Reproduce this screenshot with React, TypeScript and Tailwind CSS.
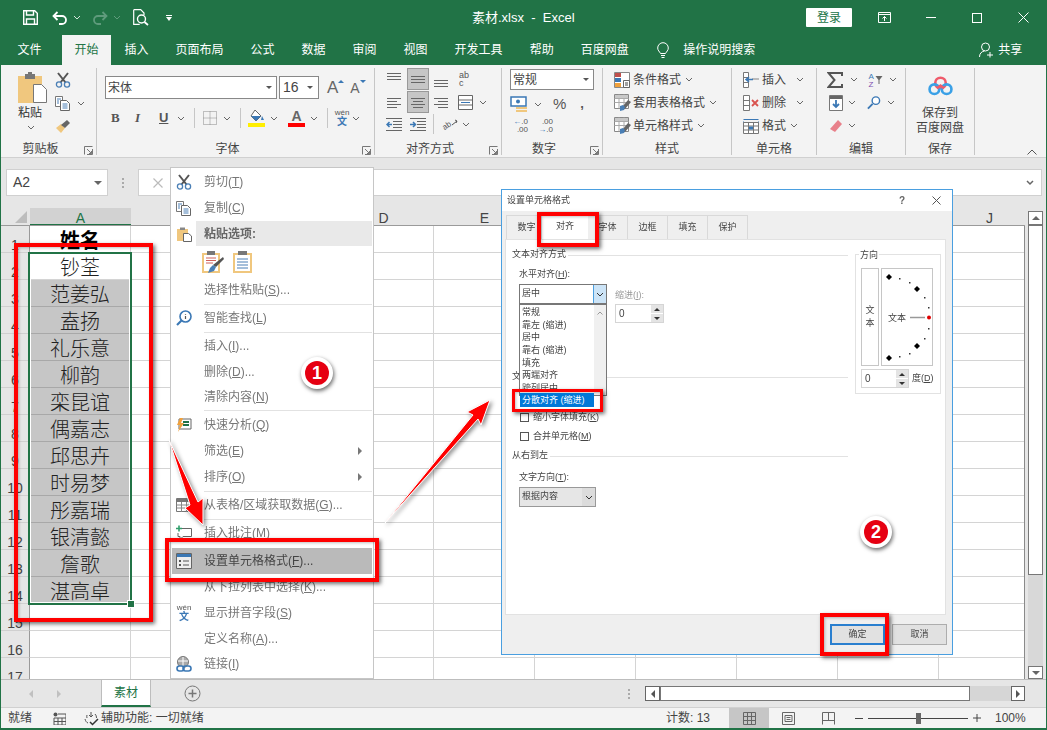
import React from "react";

function Chev({ c = "#666" }: { c?: string }) {
  return (
    <svg width="8" height="5" viewBox="0 0 8 5" className="shrink-0">
      <path d="M1 1l3 3 3-3" fill="none" stroke={c} strokeWidth="1" />
    </svg>
  );
}

function Launcher() {
  return (
    <svg width="9" height="9" viewBox="0 0 9 9" className="shrink-0">
      <path d="M.5 8.500v-8h8M8.500 3v5.500H3M3 3l4.500 4.500M7.500 5v2.500H5" fill="none" stroke="#777" strokeWidth="1" />
    </svg>
  );
}

function Lines({ rows, w = 16, h = 14, c = "#666" }: { rows: number[][]; w?: number; h?: number; c?: string }) {
  return (
    <svg width={w} height={h} viewBox={`0 0 ${w} ${h}`} className="shrink-0">
      {rows.map((r, i) => (
        <line key={i} x1={r[0]} x2={r[1]} y1={r[2] + 0.5} y2={r[2] + 0.5} stroke={c} strokeWidth="1" />
      ))}
    </svg>
  );
}

// underlines the access key, as in 剪切(T)
function Acc({ text }: { text: string }) {
  const m = text.match(/^(.*\()(.)(\).*)$/);
  if (!m) return <>{text}</>;
  return (
    <>
      {m[1]}
      <span className="underline">{m[2]}</span>
      {m[3]}
    </>
  );
}

function Scissors({ s = 16 }: { s?: number }) {
  return (
    <svg width={s} height={s} viewBox="0 0 16 16">
      <path d="M3 1l7.500 9.500M13 1L5.500 10.500" stroke="#555" strokeWidth="2" fill="none" />
      <circle cx="4" cy="12.500" r="2.600" fill="none" stroke="#4a7fb5" strokeWidth="1.300" />
      <circle cx="12" cy="12.500" r="2.600" fill="none" stroke="#4a7fb5" strokeWidth="1.300" />
    </svg>
  );
}

function CopyIcon() {
  return (
    <svg width="16" height="15" viewBox="0 0 16 15">
      <path d="M.5.500h7v10h-7z" fill="#fff" stroke="#777" />
      <path d="M5.500 4.500h6l3 3v7h-9z" fill="#fff" stroke="#666" />
      <path d="M2 3h4M2 5h2M2 7h2M7.500 8h5M7.500 10h5M7.500 12h5" stroke="#4a7fb5" />
    </svg>
  );
}

function PasteSmall() {
  return (
    <svg width="16" height="16" viewBox="0 0 16 16">
      <path d="M1 3h11v12H1z" fill="#f0c77e" />
      <path d="M4 1.500h5V4H4z" fill="#888" />
      <path d="M7.500 7.500h5l3 2.500v5.500h-8z" fill="#fff" stroke="#666" />
    </svg>
  );
}

function WenIcon() {
  return (
    <div className="flex flex-col items-center leading-none w-[18px]">
      <span className="text-[8px] leading-[8px] text-[#555]">wén</span>
      <span className="text-[10px] leading-[10px] font-bold text-[#3b78b5]">文</span>
    </div>
  );
}

function BrushMark() {
  return (
    <svg width="16" height="15" viewBox="0 0 16 15">
      <path d="M1 9l5-4 4 4-4 5z" fill="#f0c77e" />
      <path d="M6 6l6-5 3 3-5 5z" fill="#666" />
    </svg>
  );
}

function TableFmt({ accent = "#4a7fb5" }: { accent?: string }) {
  return (
    <svg width="17" height="17" viewBox="0 0 17 17">
      <path d="M.5.500h14v14H.5z" fill="#fff" stroke="#888" />
      <path d="M.5 4.500h14M.5 8.500h14M5 .5v14M10 .5v14" stroke="#aaa" />
      <path d="M1 1h13v3H1z" fill="#c8c8c8" />
      <path d="M14 6l3 2-6 7-3 1 1-4z" fill="#666" />
      <path d="M6 12l3-1 2 2-1 3-4 1z" fill={accent} />
    </svg>
  );
}

function Indent({ flip }: { flip?: boolean }) {
  return (
    <svg width="16" height="13" viewBox="0 0 16 13" className="shrink-0">
      <path d="M0 .5h16M7 3.500h9M7 6.500h9M7 9.500h9M0 12.500h16" stroke="#666" />
      <path d={flip ? "M0 6.500h5M3 4l2.500 2.500L3 9" : "M6 6.500H1M3.500 4L1 6.500 3.500 9"} fill="none" stroke="#3b78b5" strokeWidth="1.500" />
    </svg>
  );
}

function Group({ w, label, launcher, children }: { w: number; label: string; launcher?: boolean; children: React.ReactNode }) {
  return (
    <div className="flex flex-col border-r border-[#c6c6c6] shrink-0" style={{ width: w }}>
      <div className="h-[72px] shrink-0">{children}</div>
      <div className="h-[15px] shrink-0 flex items-end text-[12px] leading-[12px] text-[#444]">
        <span className={launcher ? "flex-1 text-center pr-[4px]" : "w-full text-center"}>{label}</span>
        {launcher && (
          <span className="w-[12px] flex">
            <Launcher />
          </span>
        )}
      </div>
    </div>
  );
}

function StyleRow({ icon, label, gap }: { icon: React.ReactNode; label: string; gap: number }) {
  return (
    <div className="h-[23px] flex items-center">
      <span className="w-[19px] flex">{icon}</span>
      <span className="text-[12px] text-[#444]">{label}</span>
      <span className="flex" style={{ marginLeft: gap }}>
        <Chev />
      </span>
    </div>
  );
}

function TopTab({ label, active }: { label: string; active?: boolean }) {
  return (
    <div className={`h-[30px] flex items-center justify-center whitespace-nowrap text-[12px] ${active ? "bg-[#f3f3f3] text-[#217346] w-[49px]" : "text-white px-[13.5px]"}`}>
      {label}
    </div>
  );
}

const names = ["钞荃", "范姜弘", "盍扬", "礼乐意", "柳韵", "栾昆谊", "偶嘉志", "邱思卉", "时易梦", "彤嘉瑞", "银清懿", "詹歌", "湛高卓"];
const rowNums = [1, 2, 3, 4, 5, 6, 7, 8, 9, 10, 11, 12, 13, 14, 15, 16, 17];
const colNames = ["B", "C", "D", "E", "F", "G", "H", "I", "J"];

function Grid() {
  return (
    <div className="relative flex-1 flex flex-col overflow-hidden border-r border-[#8a8a8a] bg-white">
      {rowNums.map((n) => {
        const name = n >= 2 && n <= 14 ? names[n - 2] : null;
        const sel = n >= 3 && n <= 14;
        return (
          <div key={n} className="flex h-[27px] shrink-0">
            <div className="w-[29px] shrink-0 bg-[#e6e6e6] border-r border-b border-r-[#9a9a9a] border-b-[#d0d0d0] flex items-end justify-center text-[14px] leading-[13px] text-[#444]">
              {n}
            </div>
            <div className={`w-[101px] shrink-0 border-b border-r flex items-center justify-center pt-[3px] text-[20px] leading-[24px] font-light text-[#222] ${sel ? "bg-[#c6c6c6] border-[#a8a8a8]" : "border-[#d4d4d4]"}`}>
              {n === 1 ? <span className="font-bold text-black">姓名</span> : name}
            </div>
            {colNames.map((c) => (
              <div key={c} className="w-[101px] shrink-0 border-b border-r border-[#d4d4d4]" />
            ))}
          </div>
        );
      })}
      <div className="absolute left-[27px] top-[26px] w-[104px] h-[353px] border-2 border-[#217346] shadow-[inset_0_0_0_1px_#fff]" />
      <div className="absolute left-[127px] top-[375px] w-[6px] h-[6px] bg-[#217346] outline outline-white" />
    </div>
  );
}

function MenuRow({ label, icon, sub, h = 26, hi, sel }: { label: string; icon?: React.ReactNode; sub?: boolean; h?: number; hi?: boolean; sel?: boolean }) {
  return (
    <div className={`flex items-center mx-[1px] ${sel ? "bg-[#bababa]" : ""}`} style={{ height: h }}>
      <span className="w-[24px] flex justify-center shrink-0">{icon}</span>
      <span className={`flex-1 h-full flex items-center pl-[8px] whitespace-pre text-[12px] ${hi ? "bg-[#e9e9e9] font-bold text-[#666]" : sel ? "text-[#444]" : "text-[#777]"}`}>
        <span>
          <Acc text={label} />
        </span>
      </span>
      {sub && <span className="mr-[10px] w-0 h-0 border-y-[4px] border-y-transparent border-l-[4px] border-l-[#777]" />}
    </div>
  );
}

function MenuSep({ h = 2 }: { h?: number }) {
  return (
    <div className="flex items-center pl-[33px] pr-[1px]" style={{ height: h }}>
      <div className="h-[1px] w-full bg-[#e2e2e2]" />
    </div>
  );
}

function ContextMenu() {
  return (
    <div className="absolute left-[170px] top-[167px] w-[204px] h-[512px] bg-white border border-[#c6c6c6] pt-[1px] z-10 [filter:blur(0.3px)]">
      <MenuRow label="剪切(T)" icon={<Scissors />} />
      <MenuRow label="复制(C)" icon={<CopyIcon />} />
      <MenuRow label="粘贴选项:" icon={<PasteSmall />} h={25} hi />
      <div className="h-[31px] flex items-center gap-[9px] pl-[31px]">
        <svg width="22" height="23" viewBox="0 0 22 23">
          <path d="M0 3h18v20H0z" fill="#f0c77e" />
          <path d="M2 5h14v16H2z" fill="#fff" />
          <path d="M5 1h8v4H5z" fill="#777" />
          <path d="M4 8h10M4 10.500h10M4 13h7" stroke="#d0605a" />
          <path d="M21 7l1 2-8 8-3-2z" fill="#555" />
          <path d="M11 15l3 2-2 4-6 2 2-5z" fill="#4a7fb5" />
        </svg>
        <svg width="19" height="23" viewBox="0 0 19 23">
          <path d="M0 3h19v20H0z" fill="#f0c77e" />
          <path d="M2 5h15v16H2z" fill="#fff" />
          <path d="M5 1h9v4H5z" fill="#777" />
          <path d="M4 9h11M4 12h11M4 15h11M4 18h11" stroke="#4a7fb5" />
        </svg>
      </div>
      <MenuRow label="选择性粘贴(S)..." />
      <MenuSep />
      <MenuRow
        label="智能查找(L)"
        icon={
          <svg width="16" height="16" viewBox="0 0 16 16">
            <circle cx="9.500" cy="6.500" r="5.500" fill="#fff" stroke="#3b78b5" strokeWidth="1.600" />
            <path d="M5.500 10.500L1 15" stroke="#3b78b5" strokeWidth="2.200" />
            <path d="M9.500 4v.8M9.500 6v3" stroke="#555" strokeWidth="1.200" />
          </svg>
        }
      />
      <MenuSep />
      <MenuRow label="插入(I)..." />
      <MenuRow label="删除(D)..." h={25} />
      <MenuRow label="清除内容(N)" />
      <MenuSep h={1} />
      <MenuRow
        label="快速分析(Q)"
        h={27}
        icon={
          <svg width="16" height="16" viewBox="0 0 16 16">
            <path d="M3 2h12v10H3z" fill="#fff" stroke="#666" />
            <path d="M7 5h6M7 8h6" stroke="#217346" strokeWidth="2" />
            <path d="M4 1L1 8h3l-2 7 6-9H5l2-5z" fill="#f0a13c" />
          </svg>
        }
      />
      <MenuRow label="筛选(E)" sub />
      <MenuRow label="排序(O)" sub />
      <MenuSep />
      <MenuRow
        label="从表格/区域获取数据(G)..."
        icon={
          <svg width="16" height="16" viewBox="0 0 16 16">
            <path d="M.5 1.500h15v13H.5z" fill="#fff" stroke="#777" />
            <path d="M1 2h14v3H1z" fill="#777" />
            <path d="M.5 8h15M.5 11h15M5.500 5v10M10.500 5v10" stroke="#888" />
          </svg>
        }
      />
      <MenuSep />
      <MenuRow
        label="插入批注(M)"
        icon={
          <svg width="16" height="16" viewBox="0 0 16 16">
            <path d="M5 3.500h10.500v8H7l-3 3v-3H2V8" fill="#fff" stroke="#666" />
            <path d="M3 .5v6M0 3.500h6" stroke="#2f9e6b" strokeWidth="1.600" />
          </svg>
        }
      />
      <div className="h-[2px]" />
      <MenuRow
        label="设置单元格格式(F)..."
        sel
        icon={
          <svg width="16" height="16" viewBox="0 0 16 16">
            <path d="M.5.500h15v15H.5z" fill="#eee" stroke="#666" />
            <path d="M1 1h14v3H1z" fill="#3b78b5" />
            <path d="M3 7h2v2H3zM3 11h2v2H3z" fill="#555" />
            <path d="M7 8h6M7 12h6" stroke="#555" />
          </svg>
        }
      />
      <MenuRow label="从下拉列表中选择(K)..." />
      <MenuRow label="显示拼音字段(S)" icon={<WenIcon />} />
      <MenuRow label="定义名称(A)..." h={25} />
      <MenuRow
        label="链接(I)"
        icon={
          <svg width="16" height="17" viewBox="0 0 16 17">
            <circle cx="7" cy="6" r="5.500" fill="#aaa" stroke="#777" />
            <path d="M2 5h10M7 1v9" stroke="#fff" />
            <rect x="1" y="10" width="7" height="5" rx="2.500" fill="#fff" stroke="#3b78b5" strokeWidth="1.600" />
            <rect x="7" y="10" width="8" height="5" rx="2.500" fill="none" stroke="#3b78b5" strokeWidth="1.600" />
          </svg>
        }
      />
    </div>
  );
}

function Spin({ w, value }: { w: number; value: string }) {
  return (
    <div className="h-[19px] bg-white border border-[#d5d5d5] flex items-center text-[10px] text-[#444]" style={{ width: w }}>
      <span className="flex-1 pl-[3px]">{value}</span>
      <div className="w-[12px] h-full flex flex-col gap-[1px] bg-[#fff]">
        <span className="flex-1 bg-[#e4e4e4] flex items-center justify-center">
          <span className="w-0 h-0 border-x-[3px] border-x-transparent border-b-[3px] border-b-[#333]" />
        </span>
        <span className="flex-1 bg-[#e4e4e4] flex items-center justify-center">
          <span className="w-0 h-0 border-x-[3px] border-x-transparent border-t-[3px] border-t-[#333]" />
        </span>
      </div>
    </div>
  );
}

function Heading({ label, style }: { label: string; style?: React.CSSProperties }) {
  return (
    <div className="h-[12px] flex items-center gap-[2px] text-[9px] text-[#444] pl-[6px]" style={style}>
      <span className="shrink-0">{label}</span>
      <div className="flex-1 h-[1px] bg-[#e2e2e2]" />
    </div>
  );
}

function Check({ label, mt }: { label: string; mt?: number }) {
  return (
    <div className="h-[19px] flex items-center gap-[4px] pl-[14px] text-[9px] text-[#444]" style={{ marginTop: mt }}>
      <span className="w-[9px] h-[9px] bg-white border border-[#555]" />
      <span>
        <Acc text={label} />
      </span>
    </div>
  );
}

function Dial() {
  const big = [[7, 8], [35, 20], [35, 77], [7, 89]];
  const small = [[17, 9], [27, 13], [42, 28], [46, 38], [46, 59], [42, 69], [27, 84], [17, 87]];
  return (
    <div className="relative w-[52px] h-[98px] border border-[#c6c6c6] bg-[#fff]">
      <svg width="50" height="96" viewBox="0 0 50 96">
        {big.map((p, i) => (
          <path key={i} d={`M${p[0]} ${p[1] - 3}l3 3-3 3-3-3z`} fill="#000" />
        ))}
        {small.map((p, i) => (
          <rect key={i} x={p[0]} y={p[1]} width="1.500" height="1.500" fill="#333" />
        ))}
        <path d="M28 48.500h15" stroke="#999" strokeWidth="1.500" />
        <circle cx="47" cy="48.500" r="2" fill="#e00000" />
      </svg>
      <span className="absolute left-[6px] top-[44px] text-[9px] leading-[10px] text-[#444]">文本</span>
    </div>
  );
}

function Dialog() {
  const tabs = ["字体", "边框", "填充", "保护"];
  const opts = ["常规", "靠左 (缩进)", "居中", "靠右 (缩进)", "填充", "两端对齐", "跨列居中"];
  return (
    <div className="absolute left-[501px] top-[189px] w-[452px] h-[466px] bg-[#efefef] border border-[#4a9fe0] z-10 flex flex-col [filter:blur(0.35px)]">
      <div className="h-[21px] bg-white flex items-center pl-[5px] text-[9px] text-[#444] shrink-0">
        <span className="flex-1">设置单元格格式</span>
        <span className="text-[10px] font-bold text-[#666] mr-[27px]">?</span>
        <svg width="9" height="9" viewBox="0 0 9 9" className="mr-[11px]">
          <path d="M.5.500l8 8M8.500.500l-8 8" stroke="#555" />
        </svg>
      </div>
      <div className="h-[28px] pl-[4px] flex items-end text-[9px] text-[#444] shrink-0 pt-[4px]">
        <div className="w-[36px] h-[24px] pl-[5px] border border-b-0 border-[#d9d9d9] flex items-center justify-center">数字</div>
        <div className="w-[46px] h-[25px] bg-white flex items-center justify-center">对齐</div>
        {tabs.map((t) => (
          <div key={t} className="w-[40px] h-[24px] border border-b-0 border-l-0 border-[#d9d9d9] flex items-center justify-center">
            {t}
          </div>
        ))}
      </div>
      <div className="ml-[3px] w-[441px] h-[376px] bg-white border border-[#e2e2e2] flex shrink-0">
        <div className="w-[342px] shrink-0 pt-[9px]">
          <Heading label="文本对齐方式" />
          <div className="pl-[13px] pt-[7px] text-[9px] text-[#444] leading-[12px]">
            <Acc text="水平对齐(H):" />
          </div>
          <div className="pl-[13px] pt-[4px] flex gap-[8px]">
            <div className="relative w-[88px] h-[20px] z-10 border border-[#777] bg-white flex items-center text-[9px] text-[#444]">
              <span className="flex-1 pl-[2px]">居中</span>
              <span className="w-[13px] h-full bg-[#cce4f7] border-l border-[#4a9fe0] flex items-center justify-center">
                <Chev c="#333" />
              </span>
              <div className="absolute left-[-1px] top-[19px] w-[88px] h-[92px] bg-white border border-[#777] flex flex-col pt-[1px]">
                {opts.map((o) => (
                  <div key={o} className="h-[12.700px] leading-[12.700px] pl-[2px] text-[9px] text-[#444]">
                    {o}
                  </div>
                ))}
                <div className="absolute right-0 top-0 bottom-0 w-[12px] bg-[#f0f0f0] flex justify-center pt-[6px]">
                  <svg width="6" height="4" viewBox="0 0 6 4">
                    <path d="M.5 3.500L3 1l2.500 2.500" fill="none" stroke="#999" />
                  </svg>
                </div>
              </div>
            </div>
            <div className="pt-[5px]">
              <div className="text-[9px] leading-[12px] text-[#999] pb-[3px]">
                <Acc text="缩进(I):" />
              </div>
              <Spin w={49} value="0" />
            </div>
          </div>
          <Heading label="文本控制" style={{ marginTop: 48 }} />
          <Check label="自动换行(W)" mt={5} />
          <Check label="缩小字体填充(K)" mt={1} />
          <Check label="合并单元格(M)" />
          <Heading label="从右到左" style={{ marginTop: 4 }} />
          <div className="pl-[13px] pt-[9px] text-[9px] text-[#444] leading-[12px]">
            <Acc text="文字方向(T):" />
          </div>
          <div className="ml-[13px] mt-[4px] w-[77px] h-[20px] border border-[#999] bg-[#e6e6e6] flex items-center text-[9px] text-[#444]">
            <span className="flex-1 pl-[2px]">根据内容</span>
            <span className="w-[13px] h-full bg-[#dcdcdc] flex items-center justify-center">
              <Chev c="#333" />
            </span>
          </div>
        </div>
        <div className="ml-[7px] mt-[14px] w-[86px] h-[140px] border border-[#e2e2e2] relative pt-[13px] pl-[5px]">
          <span className="absolute left-[3px] top-[-6px] bg-white px-[1px] text-[9px] leading-[12px] text-[#444]">方向</span>
          <div className="flex gap-[2px]">
            <div className="w-[18px] h-[98px] border border-[#c6c6c6] flex flex-col items-center justify-center text-[9px] leading-[13px] text-[#444]">
              <span>文</span>
              <span>本</span>
            </div>
            <Dial />
          </div>
          <div className="flex items-center gap-[3px] mt-[3px]">
            <Spin w={48} value="0" />
            <span className="text-[9px] text-[#444]">
              <Acc text="度(D)" />
            </span>
          </div>
        </div>
      </div>
      <div className="flex justify-end gap-[7px] pr-[5px] pt-[9px] text-[9px] text-[#444]">
        <div className="w-[55px] h-[21px] bg-[#e1e1e1] border-2 border-[#2a7fcf] flex items-center justify-center">确定</div>
        <div className="w-[55px] h-[21px] bg-[#e1e1e1] border border-[#adadad] flex items-center justify-center">取消</div>
      </div>
    </div>
  );
}

function Badge({ n, x, y }: { n: number; x: string; y: string }) {
  return (
    <div className={`absolute ${x} ${y} z-30 w-[32px] h-[32px] rounded-full bg-white shadow-[1px_2px_4px_rgba(0,0,0,0.6)] flex items-center justify-center`}>
      <span className="w-[24px] h-[24px] rounded-full bg-[#e60012] text-white text-[18px] font-bold flex items-center justify-center">{n}</span>
    </div>
  );
}

const redBox = "absolute z-20 border-[4px] border-[#ff0000] shadow-[2px_2px_4px_rgba(0,0,0,0.55),inset_1px_1px_3px_rgba(0,0,0,0.25)]";

export default function App() {
  return (
    <div className="relative w-[1047px] h-[730px] overflow-hidden bg-[#217346] px-[1px] pb-[2px] flex flex-col [font-family:'Liberation_Sans','Noto_Sans_CJK_SC',sans-serif]">
      {/* title bar */}
      <div className="h-[35px] shrink-0 flex items-center text-white">
        <div className="w-[22px]" />
        <svg width="15" height="15" viewBox="0 0 15 15">
          <path d="M.7.700h11l2.600 2.600v11H.7z" fill="none" stroke="#fff" strokeWidth="1.400" />
          <path d="M3.500 1v4h7V1M3.500 14V9h8v5" fill="none" stroke="#fff" strokeWidth="1.400" />
        </svg>
        <div className="w-[14px]" />
        <svg width="16" height="14" viewBox="0 0 16 14">
          <path d="M5.500 1L1.500 5l4 4M2 5h8a4 4 0 0 1 0 8H7" fill="none" stroke="#fff" strokeWidth="1.800" />
        </svg>
        <span className="ml-[5px] flex">
          <Chev c="#d5e5dc" />
        </span>
        <div className="w-[11px]" />
        <svg width="16" height="14" viewBox="0 0 16 14">
          <path d="M10.500 1l4 4-4 4M14 5H6a4 4 0 0 0 0 8h3" fill="none" stroke="#5f9b7c" strokeWidth="1.800" />
        </svg>
        <span className="ml-[5px] flex">
          <Chev c="#5f9b7c" />
        </span>
        <div className="w-[12px]" />
        <svg width="16" height="17" viewBox="0 0 16 17">
          <path d="M.7.700h7l3.300 3.300V6M.7.700v14.600h6" fill="none" stroke="#fff" strokeWidth="1.200" />
          <circle cx="8.500" cy="10" r="4" fill="none" stroke="#fff" strokeWidth="1.400" />
          <path d="M11.500 13l3.500 3" stroke="#fff" strokeWidth="1.800" />
        </svg>
        <span className="ml-[17px] flex flex-col items-center gap-[1px]">
          <span className="w-[6px] h-[1px] bg-white" />
          <span className="w-0 h-0 border-x-[3px] border-x-transparent border-t-[4px] border-t-white" />
        </span>
        <div className="w-[300px]" />
        <span className="text-[13px] whitespace-pre w-[334px]">素材.xlsx  -  Excel</span>
        <div className="w-[46px] h-[19px] bg-white rounded-[1px] text-[12px] text-[#217346] flex items-center justify-center">登录</div>
        <div className="w-[26px]" />
        <svg width="13" height="11" viewBox="0 0 13 11">
          <path d="M.5.500h12v10H.5zM.5 2.500h12M6.500 9V4.500M4.500 6.500l2-2 2 2" fill="none" stroke="#fff" />
        </svg>
        <div className="w-[35px]" />
        <span className="w-[10px] h-[1px] bg-white" />
        <div className="w-[36px]" />
        <span className="w-[10px] h-[10px] border border-white" />
        <div className="w-[36px]" />
        <svg width="11" height="11" viewBox="0 0 11 11">
          <path d="M.5.500l10 10M10.500.500l-10 10" stroke="#fff" />
        </svg>
      </div>

      {/* tabs */}
      <div className="h-[30px] shrink-0 flex items-center">
        <div className="w-[3px]" />
        <TopTab label="文件" />
        <div className="w-[7px]" />
        <TopTab label="开始" active />
        <TopTab label="插入" />
        <TopTab label="页面布局" />
        <TopTab label="公式" />
        <TopTab label="数据" />
        <TopTab label="审阅" />
        <TopTab label="视图" />
        <TopTab label="开发工具" />
        <TopTab label="帮助" />
        <TopTab label="百度网盘" />
        <svg width="12" height="17" viewBox="0 0 12 17" className="ml-[15px]">
          <path d="M3.500 11.500C2.500 9.500.7 8.500.7 6a5.300 5.300 0 0 1 10.600 0c0 2.500-1.800 3.500-2.800 5.500zM4 13.500h4M4.500 15.500h3" fill="none" stroke="#fff" />
        </svg>
        <span className="ml-[14px] text-[12px] text-white">操作说明搜索</span>
        <div className="w-[224px]" />
        <svg width="15" height="16" viewBox="0 0 15 16">
          <circle cx="6.500" cy="5" r="4" fill="none" stroke="#fff" />
          <path d="M.5 15c0-3.500 2-5.500 5-6M11 10v5.500M8 13h6" fill="none" stroke="#fff" />
        </svg>
        <span className="ml-[4px] text-[12px] text-white">共享</span>
      </div>

      {/* ribbon */}
      <div className="h-[93px] shrink-0 bg-[#f3f3f3] flex pt-[3px] pb-[2px] border-b border-[#d0d0d0]">
        <Group w={96} label="剪贴板" launcher>
          <div className="flex pl-[17px] pt-[4px]">
            <div className="w-[37px] flex flex-col items-start">
              <svg width="29" height="31" viewBox="0 0 29 31">
                <path d="M0 4h24v27H0z" fill="#f0c77e" />
                <path d="M7 2h10v5H7z" fill="#777" />
                <path d="M10 0h4v3h-4z" fill="#777" />
                <path d="M15.500 12.500h8l5 5v13h-13z" fill="#fff" stroke="#777" />
              </svg>
              <span className="text-[12px] leading-[14px] mt-[3px] text-[#333]">粘贴</span>
              <span className="ml-[9px] mt-[5px] flex">
                <Chev />
              </span>
            </div>
            <div className="flex flex-col gap-[8px]">
              <Scissors />
              <div className="flex items-center gap-[6px]">
                <CopyIcon />
                <Chev />
              </div>
              <BrushMark />
            </div>
          </div>
        </Group>
        <Group w={278} label="字体" launcher>
          <div className="pl-[8px] pt-[8px]">
            <div className="flex items-center h-[23px]">
              <div className="w-[172px] h-[23px] bg-white border border-[#888] flex items-center pl-[2px] text-[12px] text-[#444]">
                <span className="flex-1">宋体</span>
                <span className="mr-[4px] w-0 h-0 border-x-[3px] border-x-transparent border-t-[3px] border-t-[#555]" />
              </div>
              <div className="ml-[2px] w-[40px] h-[23px] bg-white border border-[#888] flex items-center pl-[3px] text-[14px] text-[#444]">
                <span className="flex-1">16</span>
                <span className="mr-[5px] w-0 h-0 border-x-[3px] border-x-transparent border-t-[3px] border-t-[#555]" />
              </div>
              <span className="ml-[8px] text-[17px] leading-[20px] text-[#666] flex items-start">
                A<span className="w-0 h-0 mt-[2px] border-x-[3px] border-x-transparent border-b-[3px] border-b-[#3b78b5]" />
              </span>
              <span className="ml-[6px] text-[14px] leading-[20px] text-[#666] flex items-start">
                A<span className="w-0 h-0 mt-[2px] border-x-[3px] border-x-transparent border-t-[3px] border-t-[#3b78b5]" />
              </span>
            </div>
            <div className="flex items-center h-[20px] mt-[9px] text-[13px] text-[#555]">
              <span className="ml-[6px] w-[24px] font-bold [font-family:'Liberation_Serif',serif]">B</span>
              <span className="w-[24px] italic [font-family:'Liberation_Serif',serif] font-bold">I</span>
              <span className="w-[18px] underline font-bold">U</span>
              <Chev />
              <span className="ml-[9px] w-[1px] h-[20px] bg-[#c6c6c6]" />
              <svg width="14" height="14" viewBox="0 0 14 14" className="ml-[8px]">
                <path d="M.5.500h13v13H.5zM.5 7h13M7 .5v13" fill="none" stroke="#888" strokeDasharray="1 1" />
              </svg>
              <span className="ml-[6px] flex">
                <Chev />
              </span>
              <span className="ml-[9px] w-[1px] h-[20px] bg-[#c6c6c6]" />
              <svg width="17" height="18" viewBox="0 0 17 18" className="ml-[7px]">
                <path d="M7 1l6 6-5 5-5-5z" fill="#fff" stroke="#666" />
                <path d="M3 7h10l-5 5z" fill="#3b78b5" />
                <path d="M14 7l2 4h-3z" fill="#3b78b5" />
                <path d="M0 14h17v4H0z" fill="#ffee00" />
              </svg>
              <span className="ml-[5px] flex">
                <Chev />
              </span>
              <div className="ml-[10px] w-[17px] h-[18px] flex flex-col items-center">
                <span className="text-[14px] leading-[14px] font-bold text-[#666]">A</span>
                <span className="w-[17px] h-[4px] bg-[#ff0000]" />
              </div>
              <span className="ml-[5px] flex">
                <Chev />
              </span>
              <span className="ml-[9px] w-[1px] h-[20px] bg-[#c6c6c6]" />
              <span className="ml-[5px] flex">
                <WenIcon />
              </span>
              <span className="ml-[1px] flex">
                <Chev />
              </span>
            </div>
          </div>
        </Group>
        <Group w={127} label="对齐方式" launcher>
          <div className="pl-[11px] flex flex-col">
            <div className="h-[22px] flex items-center">
              <span className="w-[21px] flex -mt-[6px]">
                <Lines h={9} rows={[[1, 15, 1], [1, 15, 4], [1, 15, 7]]} />
              </span>
              <span className="w-[22px] h-[22px] bg-[#c6c6c6] border border-[#999] flex items-center justify-center">
                <Lines w={14} h={9} rows={[[0, 14, 1], [0, 14, 4], [0, 14, 7]]} />
              </span>
              <span className="ml-[5px] w-[25px] flex mt-[8px]">
                <Lines w={15} h={9} rows={[[0, 14, 1], [0, 14, 4], [0, 14, 7]]} />
              </span>
              <span className="text-[9px] leading-[8px] text-[#555] w-[14px]">
                ab
                <br />c
              </span>
            </div>
            <div className="h-[22px] mt-[1px] flex items-center">
              <span className="w-[21px] flex">
                <Lines h={11} rows={[[1, 15, 1], [1, 11, 4], [1, 15, 7], [1, 11, 10]]} />
              </span>
              <span className="w-[22px] h-[22px] bg-[#c6c6c6] border border-[#999] flex items-center justify-center">
                <Lines w={14} h={11} rows={[[0, 14, 1], [2, 12, 4], [0, 14, 7], [2, 12, 10]]} />
              </span>
              <span className="ml-[5px] w-[24px] flex">
                <Lines w={15} h={11} rows={[[0, 14, 1], [4, 14, 4], [0, 14, 7], [4, 14, 10]]} />
              </span>
              <svg width="15" height="15" viewBox="0 0 15 15">
                <path d="M.5.500h14v14H.5zM.5 5h14M.5 10h14" fill="#fff" stroke="#666" />
                <path d="M3 7.500h9" stroke="#3b78b5" />
              </svg>
              <span className="ml-[6px] flex">
                <Chev />
              </span>
            </div>
            <div className="h-[22px] flex items-center">
              <Indent />
              <span className="ml-[8px] flex">
                <Indent flip />
              </span>
              <span className="ml-[7px] w-[1px] h-[20px] bg-[#c6c6c6]" />
              <svg width="17" height="17" viewBox="0 0 17 17" className="ml-[7px]">
                <text x="1" y="12" fontSize="8" fill="#555" transform="rotate(-35 6 9)">ab</text>
                <path d="M11 9l5-4M14 4l2 1-1 2" stroke="#555" fill="none" />
              </svg>
              <span className="ml-[4px] flex">
                <Chev />
              </span>
            </div>
          </div>
        </Group>
        <Group w={101} label="数字" launcher>
          <div className="pl-[8px] pt-[1px]">
            <div className="w-[84px] h-[21px] bg-white border border-[#888] flex items-center pl-[2px] text-[12px] text-[#444]">
              <span className="flex-1">常规</span>
              <span className="mr-[4px] w-0 h-0 border-x-[3px] border-x-transparent border-t-[3px] border-t-[#555]" />
            </div>
            <div className="flex items-center h-[22px] mt-[3px] text-[#555]">
              <svg width="18" height="17" viewBox="0 0 18 17">
                <path d="M1 1h15v9H1z" fill="#fff" stroke="#3b78b5" strokeWidth="1.500" />
                <circle cx="8" cy="5.500" r="2" fill="#3b78b5" />
                <path d="M6 11h11v2H6zM6 14h11v2H6z" fill="#f0c77e" />
              </svg>
              <span className="ml-[6px] flex">
                <Chev />
              </span>
              <span className="ml-[11px] text-[15px] text-[#555]">%</span>
              <span className="ml-[14px] text-[13px] font-bold">,</span>
            </div>
            <div className="flex items-center h-[20px] gap-[9px] pt-[2px] text-[8px] leading-[8px] text-[#555] text-right">
              <span className="w-[18px]">
                <span className="text-[#3b78b5]">←</span>.0
                <br />
                .00
              </span>
              <span className="w-[16px]">
                .00
                <br />
                <span className="text-[#3b78b5]">→</span>.0
              </span>
            </div>
          </div>
        </Group>
        <Group w={129} label="样式">
          <div className="pl-[11px]">
            <StyleRow
              label="条件格式"
              gap={4}
              icon={
                <svg width="16" height="16" viewBox="0 0 16 16">
                  <path d="M.5.500h15v15H.5z" fill="#fff" stroke="#888" />
                  <path d="M1 1h6v4H1z" fill="#c0504d" />
                  <path d="M1 6h6v4H1z" fill="#3b78b5" />
                  <path d="M1 11h6v4H1z" fill="#f0a13c" />
                  <path d="M9.500 8.500h6v7h-6z" fill="#fff" stroke="#666" />
                  <path d="M11 11h3M11 13h3" stroke="#444" />
                </svg>
              }
            />
            <StyleRow label="套用表格格式" gap={4} icon={<TableFmt />} />
            <StyleRow label="单元格样式" gap={4} icon={<TableFmt />} />
          </div>
        </Group>
        <Group w={85} label="单元格">
          <div className="pl-[11px]">
            <StyleRow
              label="插入"
              gap={10}
              icon={
                <svg width="16" height="16" viewBox="0 0 16 16">
                  <path d="M.5.500h5v15h-5zM.5 5.500h5M.5 10.500h5" fill="#fff" stroke="#777" />
                  <path d="M9 8h7V6H9z" fill="#bbb" />
                  <path d="M3 7.500h7M6 5l-3 2.500L6 10" fill="none" stroke="#3b78b5" strokeWidth="1.500" />
                </svg>
              }
            />
            <StyleRow
              label="删除"
              gap={10}
              icon={
                <svg width="16" height="16" viewBox="0 0 16 16">
                  <path d="M.5.500h6v15h-6zM.5 5.500h6M.5 10.500h6" fill="#fff" stroke="#777" />
                  <path d="M9 5l6 6M15 5l-6 6" stroke="#d9534f" strokeWidth="1.800" />
                </svg>
              }
            />
            <StyleRow
              label="格式"
              gap={4}
              icon={
                <svg width="16" height="16" viewBox="0 0 16 16">
                  <path d="M.5 1.500h15M.5 3.500v3M15.500 3.500v3" stroke="#3b78b5" fill="none" />
                  <path d="M.5 4.500h15v11H.5zM.5 8h15M.5 12h15M5.500 4.500v11M10.500 4.500v11" fill="#fff" stroke="#777" />
                  <path d="M6 8.500h4v3H6z" fill="#3b78b5" />
                </svg>
              }
            />
          </div>
        </Group>
        <Group w={89} label="编辑">
          <div className="grid grid-cols-[40px_1fr] pl-[10px] items-center">
            <div className="h-[23px] flex items-center gap-[7px]">
              <svg width="16" height="16" viewBox="0 0 15 16">
                <path d="M14.500 4V1H1l6 7-6 7h13.500v-3" fill="none" stroke="#555" strokeWidth="2" />
              </svg>
              <Chev />
            </div>
            <div className="h-[23px] flex items-center gap-[6px]">
              <svg width="16" height="17" viewBox="0 0 15 17">
                <text x="1" y="7.500" fontSize="8" fill="#3b78b5">A</text>
                <text x="1" y="16" fontSize="8" fill="#7f4fb0">Z</text>
                <path d="M8 5h7l-3 4v4l-1 0V9z" fill="#666" />
              </svg>
              <Chev />
            </div>
            <div className="h-[23px] flex items-center gap-[5px] pl-[2px]">
              <svg width="14" height="16" viewBox="0 0 14 16">
                <path d="M.5.500h13v15H.5z" fill="#fff" stroke="#777" />
                <path d="M1 1h12v3H1z" fill="#666" />
                <path d="M7 5v7M4 9l3 3 3-3" fill="none" stroke="#3b78b5" strokeWidth="1.800" />
              </svg>
              <Chev />
            </div>
            <div className="h-[23px] flex items-center gap-[6px]">
              <svg width="14" height="15" viewBox="0 0 15 15">
                <circle cx="9.500" cy="5.500" r="4" fill="#fff" stroke="#3b78b5" strokeWidth="1.500" />
                <path d="M6 9l-5 5" stroke="#3b78b5" strokeWidth="2" />
              </svg>
              <Chev />
            </div>
            <div className="h-[23px] flex items-center gap-[5px] pl-[2px]">
              <svg width="14" height="14" viewBox="0 0 14 14">
                <path d="M9 1l4 4-7 8-5-3z" fill="#e8808a" />
              </svg>
              <Chev />
            </div>
          </div>
        </Group>
        <Group w={69} label="保存">
          <div className="flex flex-col items-center pt-[8px] text-[12px] leading-[15px] text-[#444]">
            <svg width="25" height="21" viewBox="0 0 28 24">
              <circle cx="14" cy="8" r="6" fill="none" stroke="#ef5b6b" strokeWidth="3" />
              <circle cx="7" cy="15" r="5.500" fill="none" stroke="#3aa0e6" strokeWidth="3" />
              <circle cx="21" cy="15" r="5.500" fill="none" stroke="#3aa0e6" strokeWidth="3" />
              <path d="M10 14l4-3 4 3" fill="none" stroke="#ef5b6b" strokeWidth="3" />
            </svg>
            <span className="mt-[9px]">保存到</span>
            <span>百度网盘</span>
          </div>
        </Group>
        <div className="flex-1 flex justify-end items-end pr-[9px]">
          <svg width="10" height="6" viewBox="0 0 10 6">
            <path d="M.5 5.500L5 1l4.500 4.500" fill="none" stroke="#555" />
          </svg>
        </div>
      </div>

      {/* formula bar + sheet */}
      <div className="flex-1 bg-[#e6e6e6] flex flex-col min-h-0">
        <div className="h-[50px] shrink-0 flex pt-[11px] pb-[12px] pl-[5px] pr-[4px]">
          <div className="w-[102px] h-[27px] bg-white border border-[#d0d0d0] flex items-center pl-[6px] text-[14px] text-[#444]">
            <span className="flex-1">A2</span>
            <span className="mr-[5px] w-0 h-0 border-x-[4px] border-x-transparent border-t-[4px] border-t-[#666]" />
          </div>
          <div className="w-[30px] flex flex-col items-center justify-center gap-[2px]">
            <span className="w-[2px] h-[2px] bg-[#aaa]" />
            <span className="w-[2px] h-[2px] bg-[#aaa]" />
            <span className="w-[2px] h-[2px] bg-[#aaa]" />
          </div>
          <div className="flex-1 h-[27px] bg-white border border-[#d0d0d0] flex items-center justify-between pl-[14px] pr-[7px]">
            <svg width="10" height="10" viewBox="0 0 10 10">
              <path d="M.5.500l9 9M9.500.500l-9 9" stroke="#bbb" strokeWidth="1.200" />
            </svg>
            <svg width="8" height="6" viewBox="0 0 8 6">
              <path d="M1 1l3 3 3-3" fill="none" stroke="#666" strokeWidth="1.500" />
            </svg>
          </div>
        </div>
        <div className="flex-1 flex min-h-0">
          <div className="flex flex-col w-[1024px] shrink-0 min-h-0">
            <div className="h-[18px] shrink-0 flex overflow-hidden text-[14px] leading-[20px] text-[#444] border-b border-[#9a9a9a]">
              <div className="w-[29px] shrink-0 flex items-end justify-end pr-[3px] pb-[2px]">
                <span className="w-0 h-0 border-l-[12px] border-l-transparent border-b-[12px] border-b-[#bdbdbd]" />
              </div>
              <div className="w-[101px] h-[18px] shrink-0 bg-[#d2d2d2] border-b-2 border-[#217346] text-center text-[#217346]">A</div>
              {colNames.map((c) => (
                <div key={c} className="shrink-0 text-center w-[101px]">
                  {c}
                </div>
              ))}
            </div>
            <Grid />
          </div>
          <div className="flex-1 flex flex-col pl-[3px] pr-[3px] pt-[3px]">
            <div className="flex-1 flex flex-col bg-[#d8d8d8]">
              <div className="h-[14px] bg-white border border-[#777] flex items-center justify-center">
                <span className="w-0 h-0 border-x-[4px] border-x-transparent border-b-[4px] border-b-[#666]" />
              </div>
              <div className="h-[350px] bg-white border border-[#777]" />
              <div className="flex-1" />
              <div className="h-[13px] bg-white border border-[#777] flex items-center justify-center">
                <span className="w-0 h-0 border-x-[4px] border-x-transparent border-t-[4px] border-t-[#666]" />
              </div>
            </div>
          </div>
        </div>
        {/* sheet tabs */}
        <div className="h-[28px] shrink-0 flex items-start border-t border-[#bdbdbd]">
          <div className="w-[100px] h-full flex items-center">
            <span className="ml-[28px] w-0 h-0 border-y-[4px] border-y-transparent border-r-[4px] border-r-[#c0c0c0]" />
            <span className="ml-[24px] w-0 h-0 border-y-[4px] border-y-transparent border-l-[4px] border-l-[#c0c0c0]" />
          </div>
          <div className="w-[50px] h-[27px] bg-white border-x border-[#bdbdbd] border-b-2 border-b-[#217346] flex items-center justify-center text-[12px] text-[#217346]">素材</div>
          <svg width="17" height="17" viewBox="0 0 17 17" className="ml-[33px] mt-[5px]">
            <circle cx="8.500" cy="8.500" r="7.500" fill="none" stroke="#777" />
            <path d="M8.500 4.500v8M4.500 8.500h8" stroke="#777" strokeWidth="1.500" />
          </svg>
          <div className="ml-[427px] h-full flex flex-col justify-center gap-[2px]">
            <span className="w-[2px] h-[2px] bg-[#aaa]" />
            <span className="w-[2px] h-[2px] bg-[#aaa]" />
            <span className="w-[2px] h-[2px] bg-[#aaa]" />
          </div>
          <div className="ml-[15px] mt-[6px] h-[15px] w-[380px] flex bg-[#d6d6d6]">
            <div className="w-[15px] h-full bg-white border border-[#666] flex items-center justify-center">
              <span className="w-0 h-0 border-y-[4px] border-y-transparent border-r-[4px] border-r-[#555]" />
            </div>
            <div className="w-[310px] h-full bg-white border border-[#777]" />
            <div className="flex-1" />
            <div className="w-[14px] h-full bg-white border border-[#666] flex items-center justify-center">
              <span className="w-0 h-0 border-y-[4px] border-y-transparent border-l-[4px] border-l-[#555]" />
            </div>
          </div>
        </div>
        {/* status bar */}
        <div className="h-[21px] shrink-0 bg-[#f3f3f3] border-t border-[#d0d0d0] flex items-center text-[12px] text-[#444]">
          <span className="ml-[7px] w-[45px]">就绪</span>
          <svg width="13" height="13" viewBox="0 0 13 13">
            <circle cx="2.500" cy="2.500" r="2" fill="#555" />
            <path d="M5 2h8v11H1V6h12M5 6v7M9 6v7M1 9.500h12" fill="none" stroke="#555" />
          </svg>
          <svg width="16" height="15" viewBox="0 0 16 15" className="ml-[17px]">
            <path d="M4 7a5 5 0 0 1 0-3M8 1v5M6 4l2 2 2-2M12 3a5 5 0 0 1 1.500 4M2 8c.5 2 1.500 3.500 3 4" fill="none" stroke="#555" />
            <path d="M7 11l2.500 2.500L15 8" fill="none" stroke="#333" strokeWidth="1.500" />
          </svg>
          <span className="ml-[2px] w-[565px]">辅助功能: 一切就绪</span>
          <span className="w-[63px]">计数: 13</span>
          <div className="w-[40px] h-full bg-[#c6c6c6] flex items-center justify-center">
            <svg width="13" height="13" viewBox="0 0 13 13">
              <path d="M.5.500h12v12H.5zM.5 4.500h12M.5 8.500h12M4.500.5v12M8.500.5v12" fill="none" stroke="#666" />
            </svg>
          </div>
          <svg width="13" height="13" viewBox="0 0 13 13" className="ml-[13px]">
            <path d="M.5.500h12v12H.5zM3 3.500h7v6H3zM4.500 5.500h4M4.500 7.500h4" fill="none" stroke="#666" />
          </svg>
          <svg width="13" height="13" viewBox="0 0 13 13" className="ml-[27px]">
            <path d="M.5 12.500V.5h12v12M.5 8.500h12M6.500.5v8" fill="none" stroke="#666" />
          </svg>
          <span className="ml-[20px] w-[8px] h-[1px] bg-[#444]" />
          <div className="ml-[5px] w-[100px] h-[11px] flex items-center relative">
            <div className="w-full h-[1px] bg-[#444]" />
            <span className="absolute left-[48px] top-0 w-[5px] h-[11px] bg-[#666]" />
          </div>
          <svg width="8" height="8" viewBox="0 0 8 8" className="ml-[5px]">
            <path d="M0 4h8M4 0v8" stroke="#444" />
          </svg>
          <span className="ml-[14px]">100%</span>
        </div>
      </div>

      {/* overlays */}
      <ContextMenu />
      <Dialog />
      <div className={`${redBox} left-[14px] top-[243px] w-[139px] h-[379px]`} />
      <div className={`${redBox} left-[165px] top-[538px] w-[214px] h-[44px]`} />
      <div className={`${redBox} left-[537px] top-[212px] w-[62px] h-[35px]`} />
      <div className={`${redBox} left-[512px] top-[389px] w-[91px] h-[23px] !border-[3px]`} />
      <div className={`${redBox} left-[820px] top-[613px] w-[69px] h-[43px]`} />
      <Badge n={1} x="left-[301px]" y="top-[357px]" />
      <Badge n={2} x="left-[860px]" y="top-[516px]" />
      <div className="absolute left-[520px] top-[393px] w-[74px] h-[14px] bg-[#0078d7] z-30 text-[9px] leading-[14px] text-white pl-[2px]">分散对齐 (缩进)</div>
      <svg width="1047" height="730" viewBox="0 0 1047 730" className="absolute left-0 top-0 z-20 pointer-events-none drop-shadow-[2px_2px_2px_rgba(0,0,0,0.45)]">
        <path d="M169 440L198 502 203 498 203 525 185 508 190 505Z" fill="#ff0000" stroke="#fff" strokeWidth="1" />
        <path d="M385 523L473 415 467 412 490 400 481 425 478 419Z" fill="#ff0000" stroke="#fff" strokeWidth="1" />
      </svg>
    </div>
  );
}
